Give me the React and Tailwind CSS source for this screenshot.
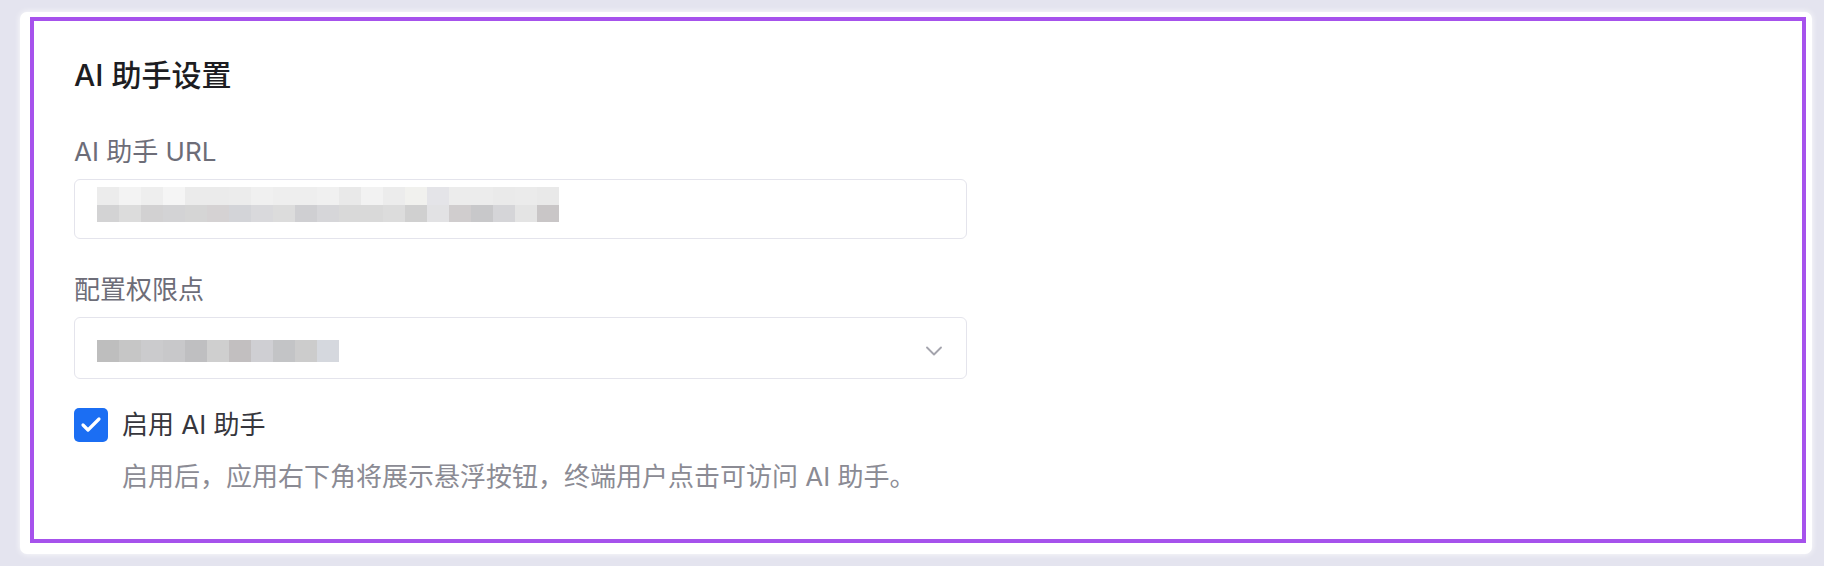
import { Check, ChevronDown } from 'lucide-react'

// mosaic used to redact the saved values
const urlTop = [
  'bg-[#ececec]', 'bg-[#f3f3f3]', 'bg-[#eeeeee]', 'bg-[#f5f5f5]', 'bg-[#ebebeb]', 'bg-[#ebebeb]', 'bg-[#ececec]',
  'bg-[#f0f0f0]', 'bg-[#eeeeee]', 'bg-[#eeeeee]', 'bg-[#f0f0f0]', 'bg-[#e9e9e9]', 'bg-[#f2f2f2]', 'bg-[#ececec]',
  'bg-[#f1f1ee]', 'bg-[#e4e4e8]', 'bg-[#ececec]', 'bg-[#ececec]', 'bg-[#eaeaea]', 'bg-[#ebebeb]', 'bg-[#e9e9e9]',
]
const urlBottom = [
  'bg-[#d3d3d4]', 'bg-[#dcdcdc]', 'bg-[#d2d1d2]', 'bg-[#d3d3d5]', 'bg-[#d5d5d5]', 'bg-[#d5d2d3]', 'bg-[#d3d4d8]',
  'bg-[#d9d9dc]', 'bg-[#dcdcdc]', 'bg-[#cfcfd2]', 'bg-[#d6d6d9]', 'bg-[#d9d9d9]', 'bg-[#d9d9d9]', 'bg-[#dcdcdc]',
  'bg-[#d0d0d0]', 'bg-[#e2e2e4]', 'bg-[#d0cdce]', 'bg-[#c8c8ca]', 'bg-[#d5d5d8]', 'bg-[#e4e4e4]', 'bg-[#c9c6c7]',
]
const permRow = [
  'bg-[#bebebe]', 'bg-[#c6c6c6]', 'bg-[#cbcbcd]', 'bg-[#c8c8ca]', 'bg-[#bfbfc1]', 'bg-[#cfcfcf]',
  'bg-[#c2bfc0]', 'bg-[#cfcfd3]', 'bg-[#c3c4c6]', 'bg-[#cccccc]', 'bg-[#d5d8de]',
]

function Mosaic({ rows }) {
  return (
    <div className="flex flex-col blur-[0.6px]">
      {rows.map((row, i) => (
        <div key={i} className="flex">
          {row.cells.map((c, j) => (
            <div key={j} className={`w-[22px] ${row.h} ${c}`} />
          ))}
        </div>
      ))}
    </div>
  )
}

export default function App() {
  return (
    <div className="h-[566px] w-full bg-[#e4e4ef] pl-[20px] pr-[12px] pt-[12px] pb-[12px] font-[Inter,'Noto_Sans_CJK_SC',sans-serif]">
      <div className="h-[542px] rounded-[7px] bg-white pl-[10px] pr-[6px] pt-[5px] pb-[11px] shadow-[0_0_6px_rgba(255,255,255,0.9)]">
        <div className="h-full border-[4px] border-[#a652ec] pl-[40px] pt-[34px]">
          <h2 className="text-[30px] leading-[40px] font-medium text-[#1d1d22]">AI 助手设置</h2>

          <div className="mt-[39px] text-[26px] leading-[36px] text-[#6d6d78]">AI 助手 URL</div>
          <div className="mt-[9px] h-[60px] w-[893px] rounded-[6px] border border-[#e4e4ec] pl-[22px] pt-[7px]">
            <Mosaic
              rows={[
                { h: 'h-[18px]', cells: urlTop },
                { h: 'h-[17px]', cells: urlBottom },
              ]}
            />
          </div>

          <div className="mt-[33px] text-[26px] leading-[36px] text-[#6d6d78]">配置权限点</div>
          <div className="mt-[9px] flex h-[62px] w-[893px] items-start justify-between rounded-[6px] border border-[#e4e4ec] pl-[22px] pr-[18px] pt-[22px]">
            <Mosaic rows={[{ h: 'h-[22px]', cells: permRow }]} />
            <ChevronDown className="mt-[-3px] h-[28px] w-[28px] text-[#a4a4ad]" strokeWidth={1.6} />
          </div>

          <label className="mt-[28px] flex items-center gap-[14px]">
            <span className="flex h-[34px] w-[34px] items-center justify-center rounded-[5px] bg-[#1b6ef3]">
              <Check className="h-[24px] w-[24px] text-white" strokeWidth={3.2} />
            </span>
            <span className="text-[26px] leading-[36px] text-[#36363c]">启用 AI 助手</span>
          </label>
          <p className="mt-[16px] pl-[48px] text-[26px] leading-[36px] text-[#8b8b94]">
            启用后，应用右下角将展示悬浮按钮，终端用户点击可访问 AI 助手。
          </p>
        </div>
      </div>
    </div>
  )
}
